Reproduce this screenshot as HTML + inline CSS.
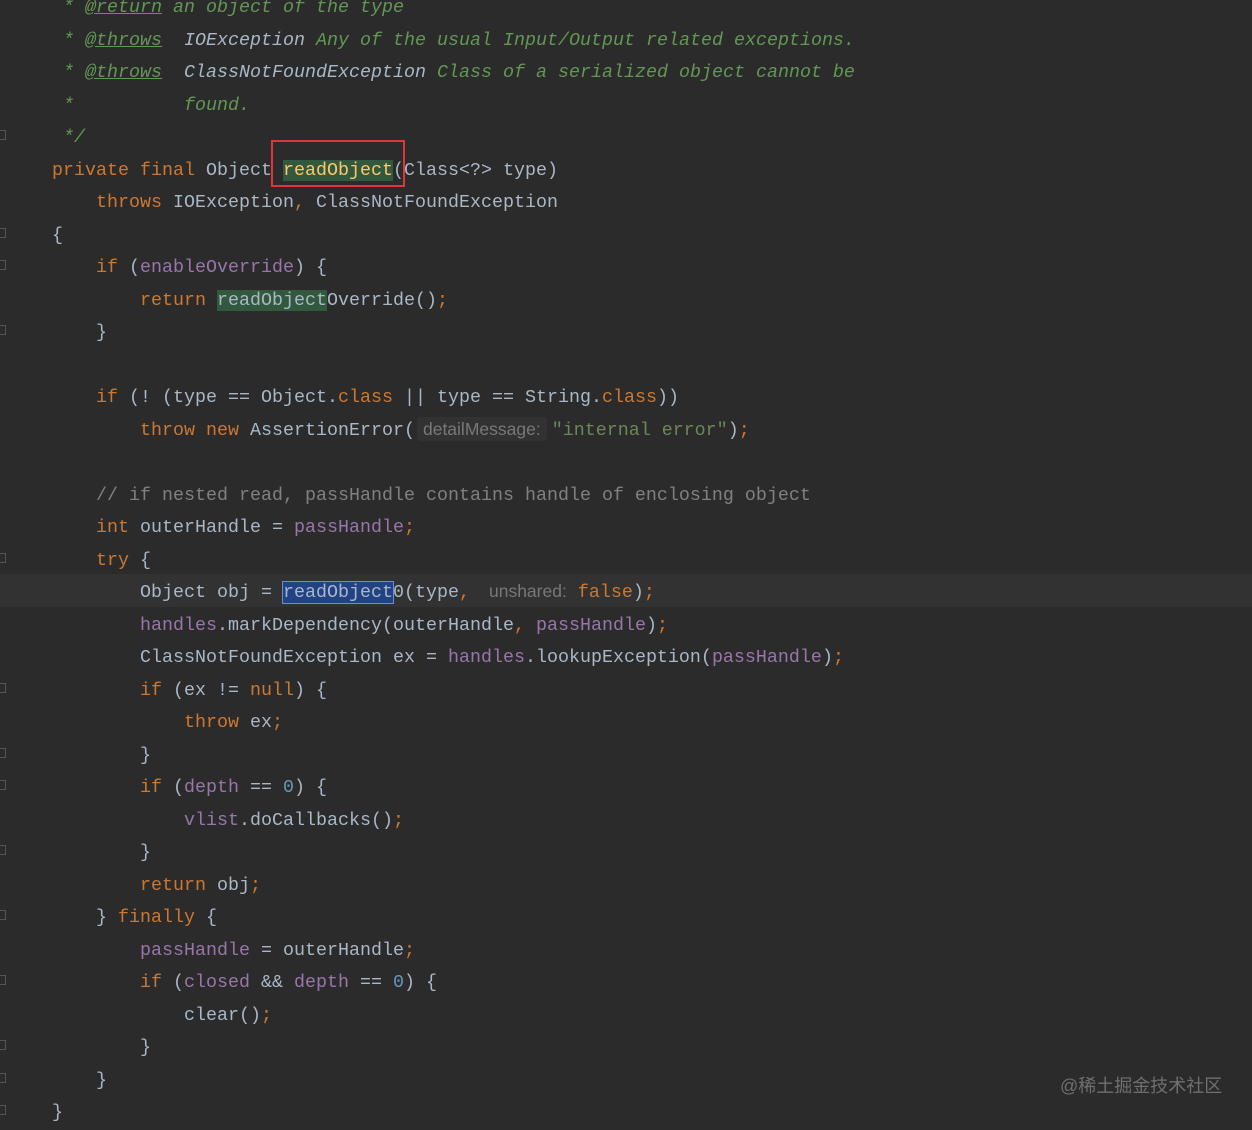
<!DOCTYPE html>
<html><head><meta charset="utf-8"><style>
html,body{margin:0;padding:0;background:#2b2b2b;width:1252px;height:1126px;overflow:hidden}
#c{position:absolute;left:52px;top:-8px;font-family:"Liberation Mono",monospace;font-size:18.33px;line-height:32.5px;color:#a9b7c6}
.l{height:32.5px;white-space:pre;overflow:visible}
.k{color:#cc7832}.d{color:#629755;font-style:italic}.dt{color:#629755;font-style:italic;text-decoration:underline}
.dc{color:#a9b7c6;font-style:italic}.cm{color:#808080}.f{color:#9876aa}.n{color:#6897bb}.s{color:#6a8759}
.h{font-family:"Liberation Sans",sans-serif;font-size:17.5px;line-height:18px;color:#787878;background:#323232;border-radius:4px;padding:2px 6px;margin:0 5px 0 2px}
.g{background:#32593d;color:#ffc66d}.g2{background:#32593d}
.b{background:#214283;outline:1px solid #6a8ed6}
.cur{position:absolute;left:0;top:574px;width:1252px;height:33px;background:#323232}
.red{position:absolute;left:271px;top:140px;width:134px;height:47px;border:2px solid #e0363a;box-sizing:border-box}
.wm{position:absolute;left:1060px;top:1072px;font-family:"Liberation Sans","Noto Sans CJK SC",sans-serif;font-size:18px;color:#6f6f6f}
.fm{position:absolute;left:0;width:6px;height:10px;border:1px solid #555;border-left:none;box-sizing:border-box}
</style></head><body>
<div class="cur"></div>
<div class="fm" style="top:130px"></div><div class="fm" style="top:228px"></div><div class="fm" style="top:260px"></div><div class="fm" style="top:325px"></div><div class="fm" style="top:553px"></div><div class="fm" style="top:683px"></div><div class="fm" style="top:748px"></div><div class="fm" style="top:780px"></div><div class="fm" style="top:845px"></div><div class="fm" style="top:910px"></div><div class="fm" style="top:975px"></div><div class="fm" style="top:1040px"></div><div class="fm" style="top:1073px"></div><div class="fm" style="top:1105px"></div>
<div id="c"><div class="l"><span class="d"> * </span><span class="dt">@return</span><span class="d"> an object of the type</span></div><div class="l"><span class="d"> * </span><span class="dt">@throws</span><span class="d">  </span><span class="dc">IOException</span><span class="d"> Any of the usual Input/Output related exceptions.</span></div><div class="l"><span class="d"> * </span><span class="dt">@throws</span><span class="d">  </span><span class="dc">ClassNotFoundException</span><span class="d"> Class of a serialized object cannot be</span></div><div class="l"><span class="d"> *          found.</span></div><div class="l"><span class="d"> */</span></div><div class="l"><span class="k">private final </span>Object <span class="g">readObject</span>(Class&lt;?&gt; type)</div><div class="l">    <span class="k">throws </span>IOException<span class="k">, </span>ClassNotFoundException</div><div class="l">{</div><div class="l">    <span class="k">if </span>(<span class="f">enableOverride</span>) {</div><div class="l">        <span class="k">return </span><span class="g2">readObject</span>Override()<span class="k">;</span></div><div class="l">    }</div><div class="l"> </div><div class="l">    <span class="k">if </span>(! (type == Object.<span class="k">class </span>|| type == String.<span class="k">class</span>))</div><div class="l">        <span class="k">throw new </span>AssertionError(<span class="h">detailMessage:</span><span class="s">"internal error"</span>)<span class="k">;</span></div><div class="l"> </div><div class="l">    <span class="cm">// if nested read, passHandle contains handle of enclosing object</span></div><div class="l">    <span class="k">int </span>outerHandle = <span class="f">passHandle</span><span class="k">;</span></div><div class="l">    <span class="k">try </span>{</div><div class="l">        Object obj = <span class="b">readObject</span>0(type<span class="k">, </span><span class="h">unshared:</span><span class="k">false</span>)<span class="k">;</span></div><div class="l">        <span class="f">handles</span>.markDependency(outerHandle<span class="k">, </span><span class="f">passHandle</span>)<span class="k">;</span></div><div class="l">        ClassNotFoundException ex = <span class="f">handles</span>.lookupException(<span class="f">passHandle</span>)<span class="k">;</span></div><div class="l">        <span class="k">if </span>(ex != <span class="k">null</span>) {</div><div class="l">            <span class="k">throw </span>ex<span class="k">;</span></div><div class="l">        }</div><div class="l">        <span class="k">if </span>(<span class="f">depth</span> == <span class="n">0</span>) {</div><div class="l">            <span class="f">vlist</span>.doCallbacks()<span class="k">;</span></div><div class="l">        }</div><div class="l">        <span class="k">return </span>obj<span class="k">;</span></div><div class="l">    } <span class="k">finally </span>{</div><div class="l">        <span class="f">passHandle</span> = outerHandle<span class="k">;</span></div><div class="l">        <span class="k">if </span>(<span class="f">closed</span> &amp;&amp; <span class="f">depth</span> == <span class="n">0</span>) {</div><div class="l">            clear()<span class="k">;</span></div><div class="l">        }</div><div class="l">    }</div><div class="l">}</div></div>
<div class="red"></div>
<div class="wm">@稀土掘金技术社区</div>
</body></html>
